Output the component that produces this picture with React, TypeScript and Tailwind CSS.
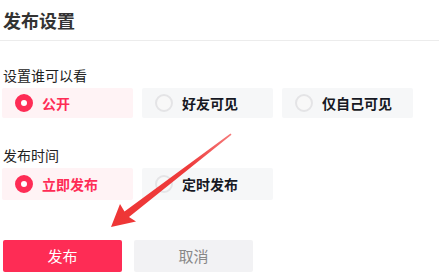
import React from "react";

type Opt = { label: string; checked?: boolean };

function Radio({ label, checked, h }: Opt & { h: string }) {
  return (
    <div
      className={`flex items-center w-[131px] ${h} pl-[13px] gap-[9px] rounded-[2px] ${
        checked ? "bg-[#fff3f5]" : "bg-[#f6f7f8]"
      }`}
    >
      {checked ? (
        <span className="w-[18px] h-[18px] rounded-full border-[6px] border-[#fe2c55] bg-white" />
      ) : (
        <span className="w-[18px] h-[18px] rounded-full border-2 border-[#e4e4e6] bg-[#f8f8f8]" />
      )}
      <span
        className={`text-[14px] leading-[20px] font-semibold ${
          checked ? "text-[#fe2c55]" : "text-[#161823]"
        }`}
      >
        {label}
      </span>
    </div>
  );
}

export default function App() {
  return (
    <div
      className="relative w-[439px] h-[277px] bg-white overflow-hidden"
      style={{ fontFamily: '"Noto Sans CJK SC", "Noto Sans", sans-serif' }}
    >
      <div className="h-[41px] border-b border-[#ececec] pl-[3px] pt-[8px]">
        <h1 className="text-[18px] leading-[24px] font-bold text-[#333]">发布设置</h1>
      </div>

      <div className="pl-[2px]">
        <div className="mt-[24px] pl-[1px] text-[14px] leading-[20px] text-[#222]">设置谁可以看</div>
        <div className="mt-[3px] flex gap-[9px]">
          <Radio label="公开" checked h="h-[30px]" />
          <Radio label="好友可见" h="h-[30px]" />
          <Radio label="仅自己可见" h="h-[30px]" />
        </div>

        <div className="mt-[27px] pl-[1px] text-[14px] leading-[20px] text-[#222]">发布时间</div>
        <div className="mt-[3px] flex gap-[9px]">
          <Radio label="立即发布" checked h="h-[32px]" />
          <Radio label="定时发布" h="h-[32px]" />
        </div>

        <div className="mt-[40px] pl-[1px] flex gap-[12px]">
          <button className="w-[119px] h-[32px] rounded-[2px] bg-[#fe2c55] text-white text-[15px]">
            发布
          </button>
          <button className="w-[119px] h-[32px] rounded-[2px] bg-[#f2f2f4] text-[#888] text-[15px]">
            取消
          </button>
        </div>
      </div>

      <svg className="absolute left-0 top-0 pointer-events-none" width="439" height="277">
        <defs>
          <linearGradient id="ar" x1="231" y1="134" x2="111" y2="227" gradientUnits="userSpaceOnUse">
            <stop offset="0" stopColor="#f57a7a" />
            <stop offset="0.35" stopColor="#ee3b3b" />
            <stop offset="1" stopColor="#ee3636" />
          </linearGradient>
        </defs>
        <polygon
          points="111,227 136,221.5 129,217 231.5,134.8 230.5,133.6 124.5,211.5 120,204"
          fill="url(#ar)"
        />
      </svg>
    </div>
  );
}
